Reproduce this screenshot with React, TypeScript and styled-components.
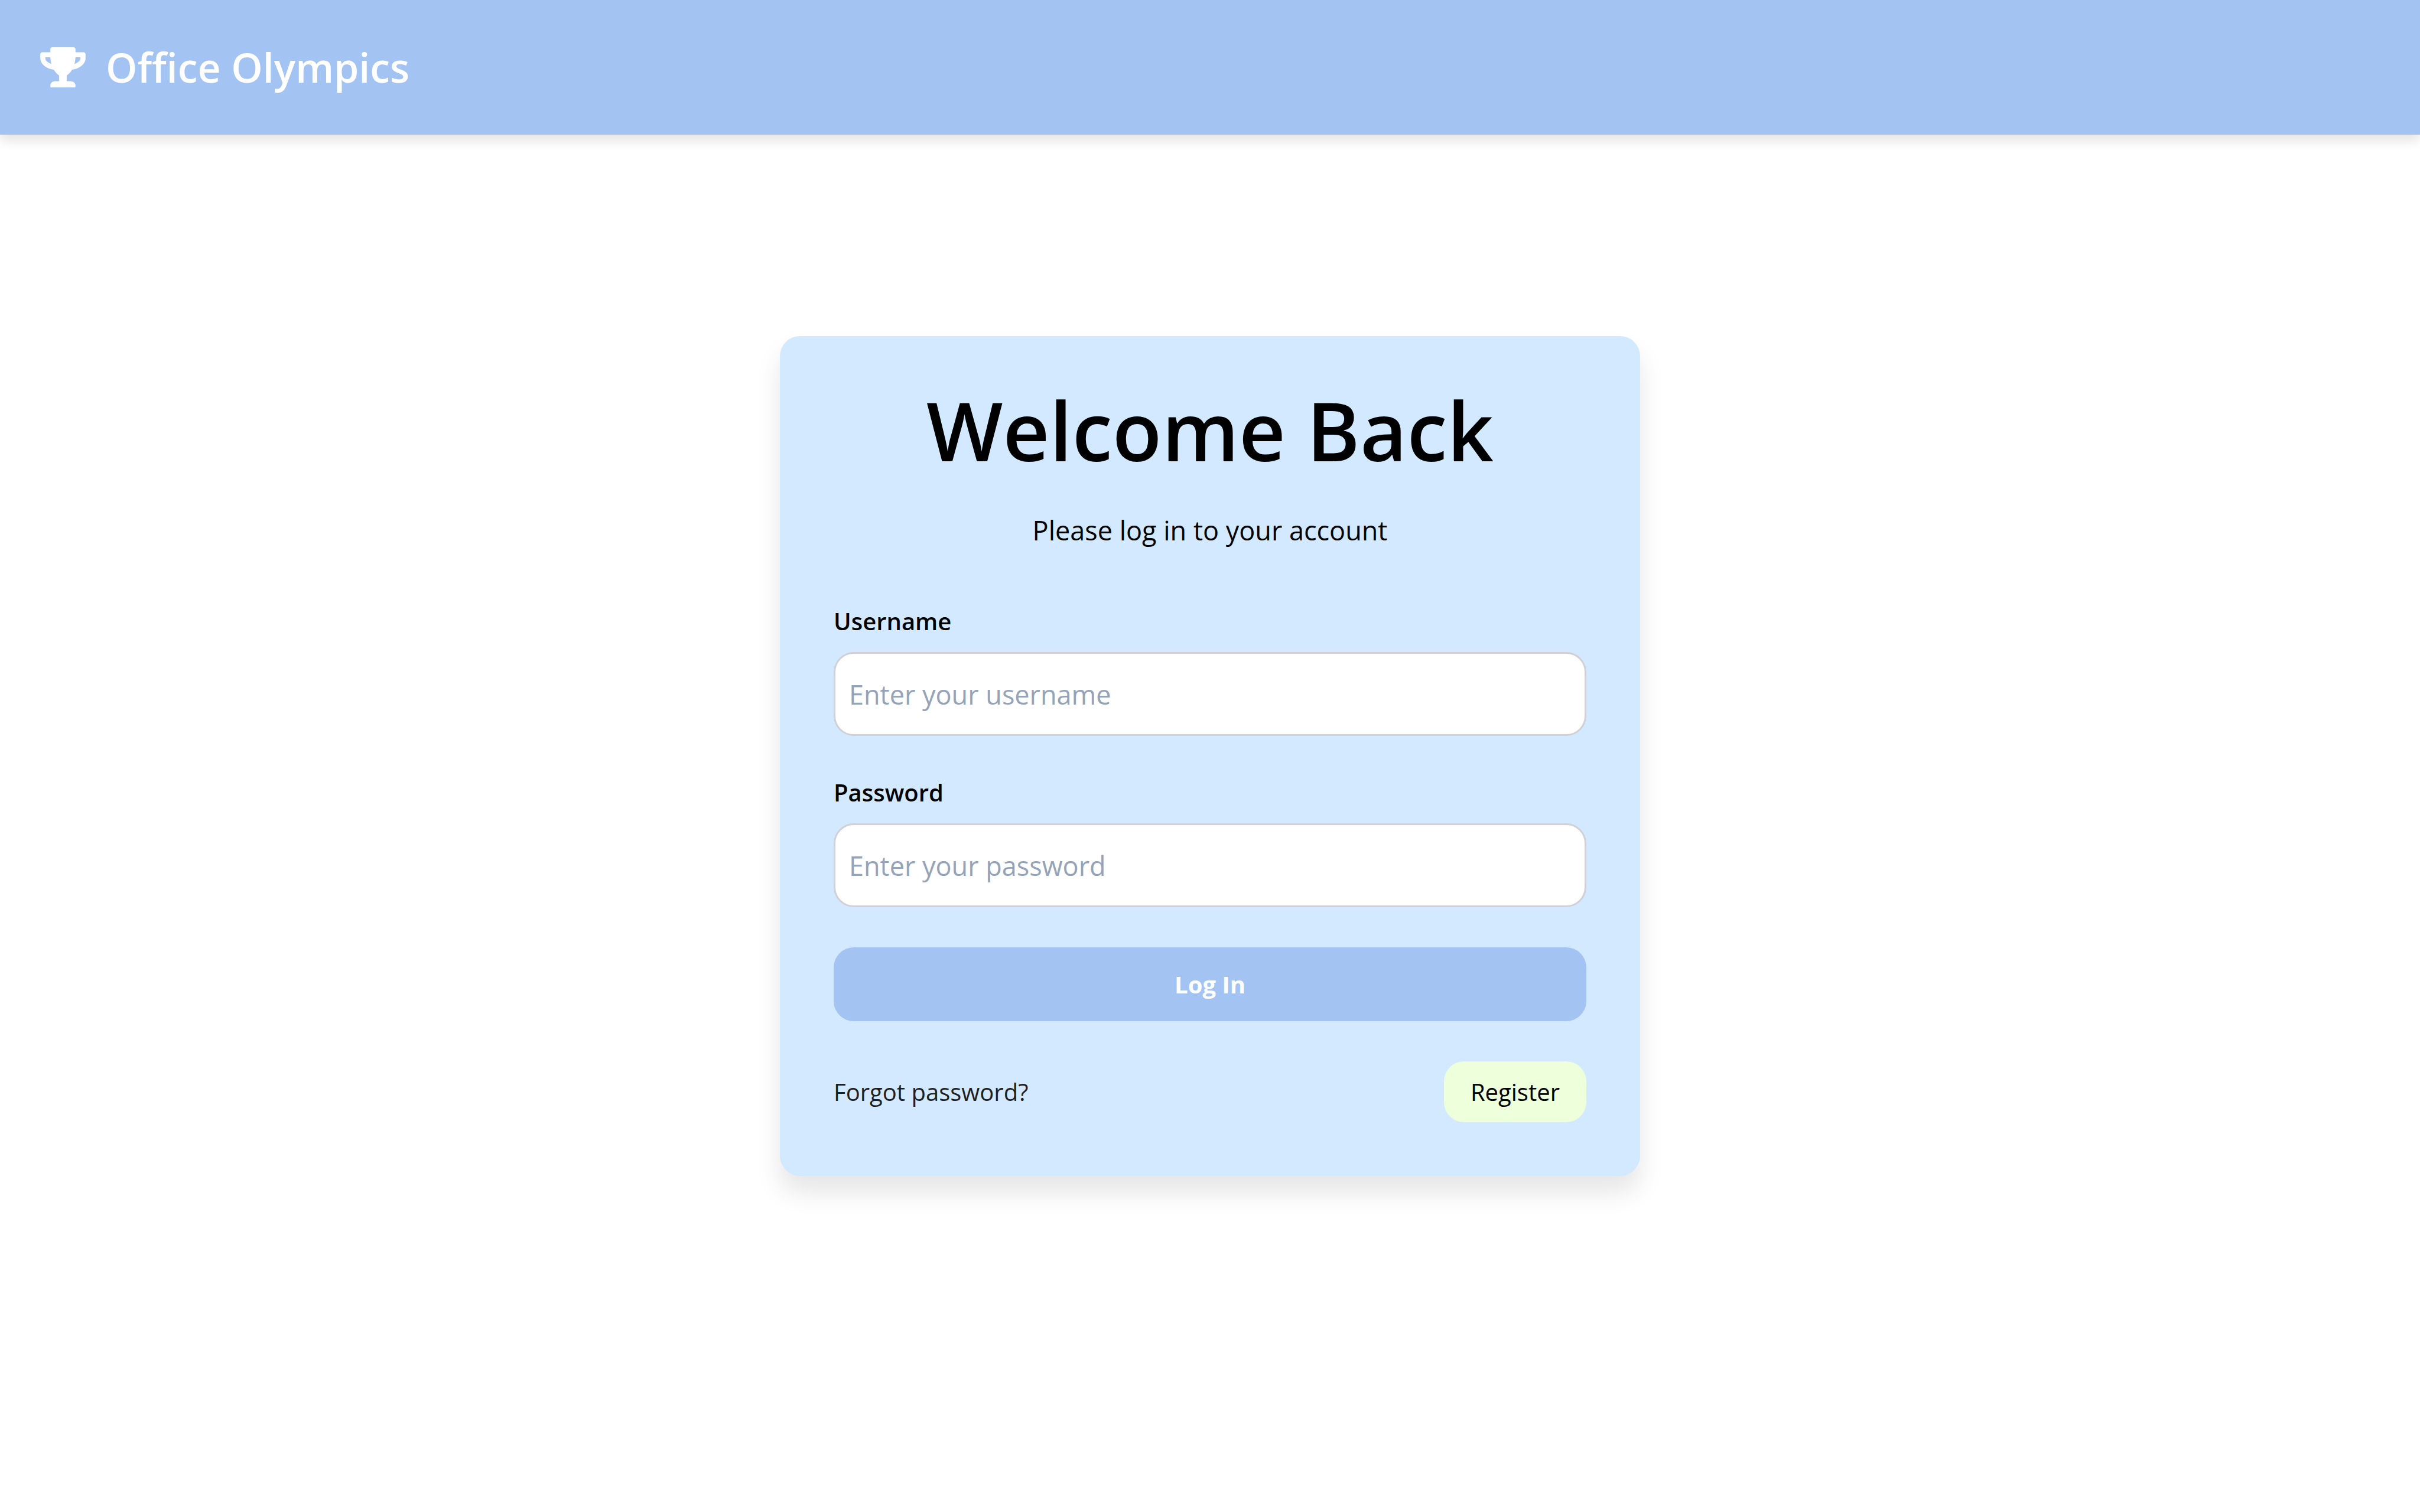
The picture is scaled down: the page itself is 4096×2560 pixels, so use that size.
import React from "react";
import styled, { createGlobalStyle } from "styled-components";
import { FaTrophy } from "react-icons/fa";

const GlobalStyle = createGlobalStyle`
  *, *::before, *::after {
    box-sizing: border-box;
  }

  body {
    margin: 0;
    background: #ffffff;
    color: #000000;
    font-family: "Open Sans", "Noto Sans", sans-serif;
  }
`;

const Page = styled.div`
  display: flex;
  flex-direction: column;
  min-height: 100vh;
`;

const Header = styled.header`
  display: flex;
  align-items: center;
  padding: 68px;
  background: #a3c4f3;
  color: #ffffff;
  box-shadow: 0 11px 17px rgba(0, 0, 0, 0.1);
`;

const Brand = styled.div`
  display: flex;
  align-items: center;
  gap: 34px;
  font-size: 68px;
  line-height: 92px;
  font-weight: 600;
`;

const BrandIcon = styled(FaTrophy)`
  width: 77px;
  height: 68px;
`;

/* The bottom padding equals the header height, so the card is centred in the window. */
const Main = styled.main`
  flex: 1;
  display: flex;
  align-items: center;
  justify-content: center;
  padding-bottom: 228px;
`;

const Card = styled.section`
  width: 100%;
  max-width: 1456px;
  padding: 91px;
  border-radius: 34px;
  background: #d3e9ff;
  box-shadow: 0 28px 43px rgba(0, 0, 0, 0.1);
`;

const Title = styled.h1`
  margin: 0 0 68px;
  font-size: 137px;
  line-height: 136px;
  font-weight: 600;
  text-align: center;
`;

const Subtitle = styled.p`
  margin: 0 0 92px;
  font-size: 45px;
  line-height: 68px;
  text-align: center;
`;

const Form = styled.form`
  display: flex;
  flex-direction: column;
  gap: 68px;
`;

const Field = styled.div`
  display: flex;
  flex-direction: column;
  gap: 24px;
`;

const Label = styled.label`
  font-size: 40px;
  line-height: 56px;
  font-weight: 600;
`;

const Input = styled.input`
  width: 100%;
  height: 142px;
  padding: 34px 23px;
  border: 3px solid #d1d0d6;
  border-radius: 34px;
  background: #ffffff;
  color: inherit;
  font-family: inherit;
  font-size: 45px;
  line-height: 68px;

  &::placeholder {
    color: #94a3b8;
    opacity: 1;
  }
`;

const Button = styled.button<{ $variant: "primary" | "secondary" }>`
  padding: ${(p) => (p.$variant === "primary" ? "34px 45px" : "23px 45px")};
  border: 0;
  border-radius: 34px;
  background: ${(p) => (p.$variant === "primary" ? "#a3c4f3" : "#eeffdb")};
  color: ${(p) => (p.$variant === "primary" ? "#ffffff" : "#000000")};
  font-family: inherit;
  font-size: 40px;
  line-height: 57px;
  font-weight: ${(p) => (p.$variant === "primary" ? 700 : 400)};
  cursor: pointer;
`;

const Actions = styled.div`
  display: flex;
  align-items: center;
  justify-content: space-between;
`;

const TextLink = styled.a`
  color: #1f1f1f;
  font-size: 40px;
  line-height: 57px;
  text-decoration: none;
`;

export default function App() {
  return (
    <>
      <GlobalStyle />
      <Page>
        <Header>
          <Brand>
            <BrandIcon aria-hidden="true" />
            <span>Office Olympics</span>
          </Brand>
        </Header>
        <Main>
          <Card>
            <Title>Welcome Back</Title>
            <Subtitle>Please log in to your account</Subtitle>
            <Form onSubmit={(e) => e.preventDefault()}>
              <Field>
                <Label htmlFor="username">Username</Label>
                <Input id="username" type="text" placeholder="Enter your username" />
              </Field>
              <Field>
                <Label htmlFor="password">Password</Label>
                <Input id="password" type="password" placeholder="Enter your password" />
              </Field>
              <Button type="submit" $variant="primary">
                Log In
              </Button>
              <Actions>
                <TextLink href="#forgot">Forgot password?</TextLink>
                <Button type="button" $variant="secondary">
                  Register
                </Button>
              </Actions>
            </Form>
          </Card>
        </Main>
      </Page>
    </>
  );
}
